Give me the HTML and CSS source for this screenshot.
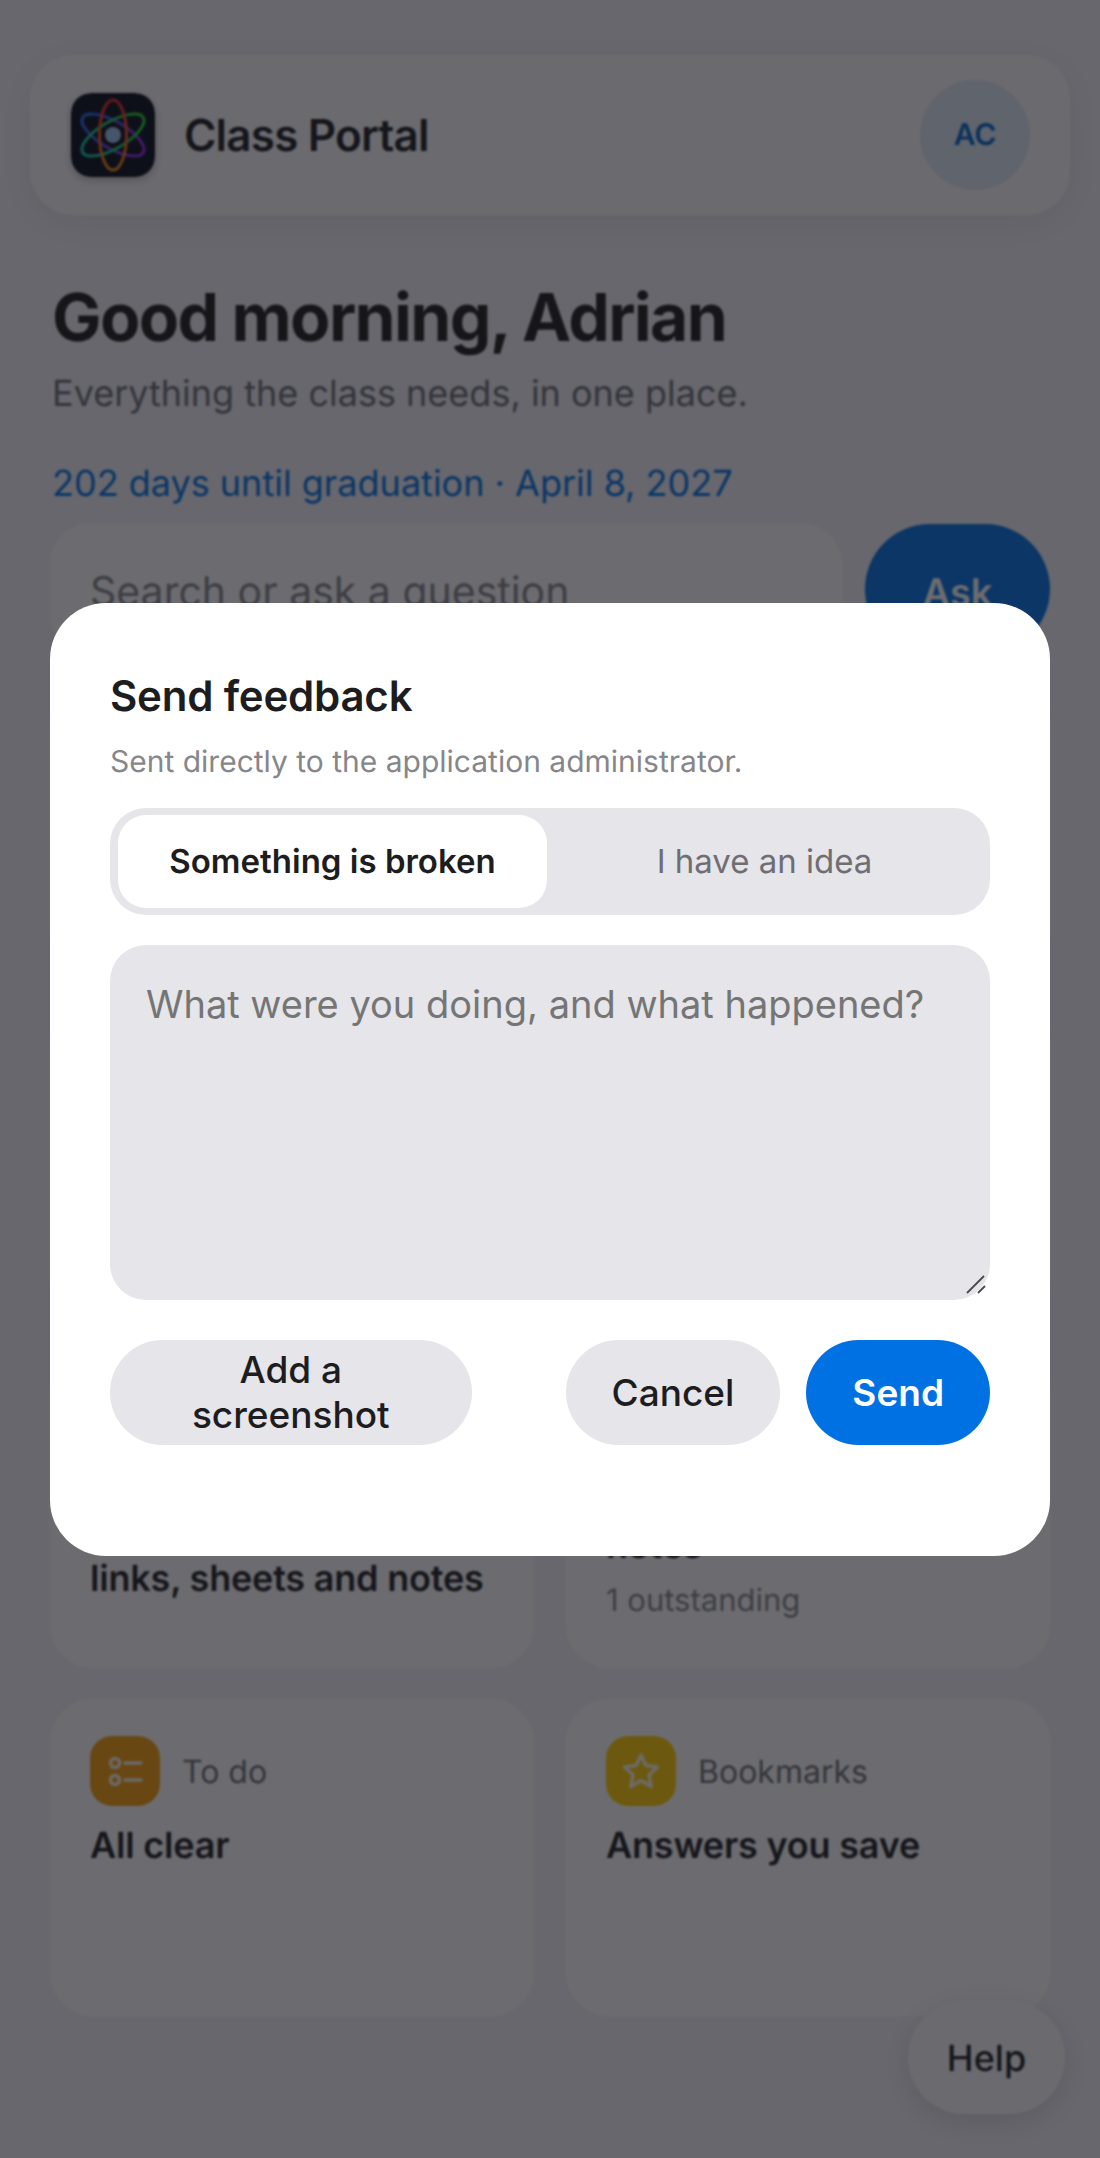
FILE: index.html
```html
<!DOCTYPE html>
<html lang="en">
<head>
<meta charset="utf-8">
<title>Class Portal</title>
<link rel="stylesheet" href="styles.css">
</head>
<body>
<div class="page">
  <header class="topbar">
    <svg class="logo" viewBox="0 0 84 84" aria-hidden="true">
      <defs>
        <linearGradient id="ringA" x1="0" y1="0" x2="0" y2="1"><stop offset="0" stop-color="#f0202a"/><stop offset="1" stop-color="#f08a10"/></linearGradient>
        <linearGradient id="ringB" x1="0" y1="0" x2="0" y2="1"><stop offset="0" stop-color="#1a6cf0"/><stop offset="1" stop-color="#a020f0"/></linearGradient>
        <linearGradient id="ringC" x1="0" y1="0" x2="0" y2="1"><stop offset="0" stop-color="#20d020"/><stop offset="1" stop-color="#10c8b0"/></linearGradient>
      </defs>
      <rect width="84" height="84" rx="20" fill="#0a0e1c"/>
      <ellipse cx="42" cy="42" rx="13.5" ry="35" fill="none" stroke="url(#ringB)" stroke-width="3" transform="rotate(-60 42 42)"/>
      <ellipse cx="42" cy="42" rx="13.5" ry="35" fill="none" stroke="url(#ringC)" stroke-width="3" transform="rotate(60 42 42)"/>
      <ellipse cx="42" cy="42" rx="13.5" ry="35" fill="none" stroke="url(#ringA)" stroke-width="3"/>
      <circle cx="42" cy="42" r="8" fill="#9ac4f0"/>
    </svg>
    <span class="brand">Class Portal</span>
    <span class="avatar">AC</span>
  </header>

  <section class="intro">
    <h1 class="greeting">Good morning, Adrian</h1>
    <p class="tagline">Everything the class needs, in one place.</p>
    <p class="countdown">202 days until graduation · April 8, 2027</p>
  </section>

  <form class="askbar">
    <div class="search">Search or ask a question</div>
    <div class="ask">Ask</div>
  </form>

  <div class="grid">
    <div class="card card-tall"></div>
    <div class="card card-tall"></div>
    <div class="card card-mid"></div>
    <div class="card card-mid"></div>
    <div class="card">
      <div class="card-head">
        <span class="tile tile-orange">
          <svg viewBox="0 0 70 70"><path d="M24 19h20v32l-10-8-10 8z"/></svg>
        </span>
        <span class="label">Quick references</span>
      </div>
      <div class="number">14</div>
      <div class="title">links, sheets and notes</div>
    </div>
    <div class="card">
      <div class="card-head">
        <span class="tile tile-indigo">
          <svg viewBox="0 0 70 70"><rect x="19" y="20" width="32" height="30" rx="6"/><path d="M27 37l6 5 10-12"/></svg>
        </span>
        <span class="label">Assignments</span>
      </div>
      <div class="title title-top">Graduation rehearsal notes</div>
      <div class="meta">1 outstanding</div>
    </div>
    <div class="card">
      <div class="card-head">
        <span class="tile tile-amber">
          <svg viewBox="0 0 70 70"><circle cx="25" cy="27" r="4.5"/><circle cx="25" cy="44" r="4.5"/><path d="M35 27h16M35 44h16"/></svg>
        </span>
        <span class="label">To do</span>
      </div>
      <div class="title title-top">All clear</div>
    </div>
    <div class="card">
      <div class="card-head">
        <span class="tile tile-yellow">
          <svg viewBox="0 0 70 70"><path d="M35 19l5 10.5 11.500 1.500-8.500 8 2.200 11.500L35 44.500 24.800 50.500 27 39l-8.500-8L30 29.500z"/></svg>
        </span>
        <span class="label">Bookmarks</span>
      </div>
      <div class="title title-top">Answers you save</div>
    </div>
  </div>
  <div class="help">Help</div>
</div>

<div class="backdrop">
  <div class="modal" role="dialog">
    <h2 class="modal-title">Send feedback</h2>
    <p class="modal-sub">Sent directly to the application administrator.</p>
    <div class="segmented">
      <div class="seg seg-on">Something is broken</div>
      <div class="seg">I have an idea</div>
    </div>
    <div class="field">
      <textarea class="message" placeholder="What were you doing, and what happened?"></textarea>
      <svg class="grip" viewBox="0 0 20 20" aria-hidden="true"><path d="M1 18L18 1M12 18l7-7"/></svg>
    </div>
    <div class="actions">
      <button class="btn" type="button">Add a screenshot</button>
      <span class="spacer"></span>
      <button class="btn" type="button">Cancel</button>
      <button class="btn btn-send" type="button">Send</button>
    </div>
  </div>
</div>
</body>
</html>
```

FILE: styles.css
```css
* { box-sizing: border-box; }
html, body { margin: 0; height: 2158px; overflow: hidden; }
body {
  background: #f2f2f7;
  font-family: Inter, "Liberation Sans", sans-serif;
  color: #1d1d1f;
  text-rendering: geometricPrecision;
}
.page { position: relative; height: 2158px; overflow: hidden; padding: 55px 50px 0; }

.topbar {
  display: flex;
  align-items: center;
  height: 160px;
  margin: 0 -20px;
  padding: 0 40px 0 41px;
  background: #fbfbfd;
  border-radius: 44px;
  box-shadow: 0 8px 40px rgba(0,0,0,.07);
}
.logo { width: 84px; height: 84px; flex: none; box-shadow: 0 3px 8px rgba(0,0,0,.25); border-radius: 20px; }
.brand { margin-left: 29px; font-size: 44px; font-weight: 600; letter-spacing: -.8px; flex: 1; }
.avatar {
  width: 110px; height: 110px; border-radius: 50%;
  display: flex; align-items: center; justify-content: center;
  background: #dfe9f4; color: #0066cc;
  font-size: 30px; font-weight: 600;
}

.intro { padding: 0 2px; }
.greeting { margin: 62px 0 0; font-size: 66px; line-height: 80px; font-weight: 700; letter-spacing: -1.65px; }
.tagline { margin: 14px 0 0; font-size: 36px; line-height: 44px; color: #6e6e73; }
.countdown { margin: 46px 0 0; font-size: 36px; line-height: 44px; color: #0071e3; }

.askbar { display: flex; gap: 23px; margin-top: 19px; }
.search {
  flex: 1; height: 130px; padding: 42px 40px 0;
  background: #fff; border-radius: 40px;
  font-size: 41px; line-height: 50px; color: #86868b;
}
.ask {
  width: 185px; height: 130px; border-radius: 65px;
  background: #0071e3; color: #fff;
  font-size: 38px; font-weight: 600; text-align: center; line-height: 130px;
  padding-top: 4px;
}

.grid { display: grid; grid-template-columns: 484px 484px; gap: 31px 32px; margin-top: 30px; }
.card { height: 317px; padding: 37px 40px 0; background: #fff; border-radius: 44px; }
.card-tall { height: 288px; }
.card-mid { height: 317px; }
.card-head { display: flex; align-items: center; gap: 22px; }
.tile { width: 70px; height: 70px; flex: none; border-radius: 22px; display: block; }
.tile svg { display: block; width: 70px; height: 70px; fill: none; stroke: #fff; stroke-width: 3.5; stroke-linecap: round; stroke-linejoin: round; opacity: .9; }
.tile-orange { background: #ff9f0a; }
.tile-indigo { background: #5e5ce6; }
.tile-amber { background: #f59e0b; }
.tile-yellow { background: #ffcc00; }
.label { font-size: 32px; color: #6e6e73; }
.number { margin-top: 16px; font-size: 66px; line-height: 80px; font-weight: 700; padding-left: 4px; }
.title { font-size: 36px; line-height: 48px; font-weight: 600; letter-spacing: -.2px; }
.title-top { margin-top: 15px; }
.meta { margin-top: 12px; font-size: 31px; line-height: 40px; color: #86868b; }

.help {
  position: absolute; right: 35px; bottom: 44px;
  width: 157px; height: 113px; border-radius: 57px;
  background: #fbfbfd; box-shadow: 0 8px 30px rgba(0,0,0,.12);
  display: flex; align-items: center; justify-content: center;
  font-size: 36px; font-weight: 500;
}

.backdrop {
  position: fixed; inset: 0;
  background: rgba(18,18,24,.62);
  backdrop-filter: blur(1px);
  display: flex; align-items: center; justify-content: center;
}
.modal {
  width: 1000px; height: 953px; padding: 68px 60px 0;
  background: #fff; border-radius: 56px;
}
.modal-title { margin: 0; font-size: 42px; line-height: 52px; font-weight: 600; color: #1d1d1f; letter-spacing: -.2px; }
.modal-sub { margin: 19px 0 0; font-size: 30px; line-height: 40px; color: #86868b; }
.segmented {
  display: flex; height: 107px; margin-top: 26px; padding: 7px 8px;
  background: #e5e5ea; border-radius: 36px;
}
.seg {
  flex: 1; display: flex; align-items: center; justify-content: center;
  font-size: 33px; font-weight: 400; color: #6e6e73;
}
.seg-on { flex: none; width: 429px; background: #fff; border-radius: 28px; font-weight: 600; color: #1d1d1f; }
.field { position: relative; margin-top: 30px; height: 355px; }
.message {
  display: block; width: 100%; height: 100%; padding: 34px 36px;
  border: 0; outline: 0; resize: none;
  background: #e5e5ea; border-radius: 36px;
  font: 400 38px/50px Inter, "Liberation Sans", sans-serif;
}
.message::placeholder { color: #757575; opacity: 1; }
.grip { position: absolute; right: 4px; bottom: 5px; width: 20px; height: 20px; fill: none; stroke: #4a4a4a; stroke-width: 1.8; }
.actions { display: flex; gap: 26px; margin-top: 40px; }
.spacer { flex: 1; margin-left: 42px; }
.btn {
  height: 105px; padding: 0 46px; border: 0; border-radius: 53px;
  background: #e5e5ea; color: #1d1d1f;
  font: 500 37px Inter, "Liberation Sans", sans-serif;
}
.btn-send { background: #0071e3; color: #fff; font-weight: 600; }
```
